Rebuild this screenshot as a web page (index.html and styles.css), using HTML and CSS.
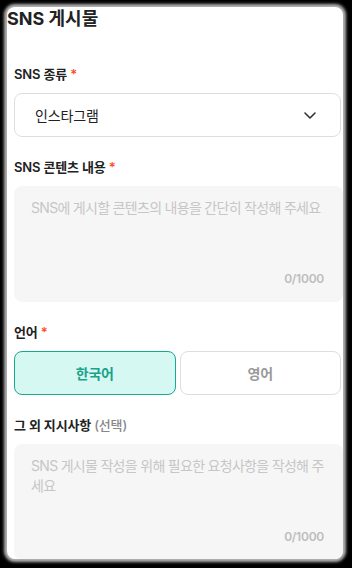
FILE: index.html
```html
<!DOCTYPE html>
<html lang="ko">
<head>
<meta charset="utf-8">
<title>SNS 게시물</title>
<link rel="stylesheet" href="styles.css">
</head>
<body>
<div class="card">
  <h1 class="title">SNS 게시물</h1>
  <div class="form">
    <div class="field">
      <div class="label">SNS 종류 <span class="req">*</span></div>
      <div class="select">
        <span class="select-text">인스타그램</span>
        <svg class="chev" width="12" height="7" viewBox="0 0 12 7"><path d="M1 1l5 5 5-5" fill="none" stroke="#333" stroke-width="1.6" stroke-linecap="round" stroke-linejoin="round"/></svg>
      </div>
    </div>
    <div class="field">
      <div class="label">SNS 콘텐츠 내용 <span class="req">*</span></div>
      <div class="textarea">
        <div class="placeholder">SNS에 게시할 콘텐츠의 내용을 간단히 작성해 주세요</div>
        <div class="counter">0/1000</div>
      </div>
    </div>
    <div class="field">
      <div class="label">언어 <span class="req">*</span></div>
      <div class="toggle">
        <div class="opt opt-on">한국어</div>
        <div class="opt">영어</div>
      </div>
    </div>
    <div class="field">
      <div class="label">그 외 지시사항 <span class="opt-label">(선택)</span></div>
      <div class="textarea">
        <div class="placeholder">SNS 게시물 작성을 위해 필요한 요청사항을 작성해 주세요</div>
        <div class="counter">0/1000</div>
      </div>
    </div>
  </div>
</div>
</body>
</html>
```

FILE: styles.css
```css
html, body {
  margin: 0;
  padding: 0;
}
body {
  width: 352px;
  height: 568px;
  overflow: hidden;
  background: #000;
  font-family: Inter, "Noto Sans CJK KR", sans-serif;
  color: #222;
  letter-spacing: -0.01em;
}
.card {
  margin: 7px;
  width: 336px;
  height: 552px;
  background: #fff;
  border-radius: 8px;
  overflow: hidden;
  box-shadow: 0 0 3px 3px rgba(210, 210, 210, 0.85);
}
.title {
  margin: 0;
  font-size: 18px;
  font-weight: 700;
  line-height: 24px;
  color: #222;
  letter-spacing: 0;
}
.form {
  padding: 33px 0 0 7px;
  display: flex;
  flex-direction: column;
  gap: 20px;
}
.field {
  display: flex;
  flex-direction: column;
  gap: 9px;
}
.label {
  font-size: 13px;
  font-weight: 600;
  line-height: 20px;
  color: #222;
}
.req {
  color: #ff4b1f;
}
.opt-label {
  color: #888;
  font-weight: 500;
}
.select {
  box-sizing: border-box;
  width: 327px;
  height: 44px;
  border: 1px solid #dedede;
  border-radius: 8px;
  display: flex;
  align-items: center;
  justify-content: space-between;
  padding: 0 24px 0 20px;
}
.select-text {
  font-size: 14px;
  color: #222;
}
.chev {
  display: block;
}
.textarea {
  box-sizing: border-box;
  width: 329px;
  height: 116px;
  background: #f6f6f6;
  border-radius: 8px;
  padding: 12px 16px 14px 17px;
  display: flex;
  flex-direction: column;
}
.placeholder {
  font-size: 14px;
  line-height: 20px;
  color: #c6c6c6;
  letter-spacing: -0.05em;
}
.counter {
  margin-top: auto;
  padding-right: 3px;
  text-align: right;
  font-size: 12px;
  font-weight: 600;
  line-height: 18px;
  color: #bdbdbd;
  letter-spacing: -0.02em;
}
.toggle {
  display: flex;
  gap: 4px;
  width: 327px;
}
.opt {
  box-sizing: border-box;
  flex: 1;
  height: 44px;
  border: 1px solid #dedede;
  border-radius: 8px;
  display: flex;
  align-items: center;
  justify-content: center;
  font-size: 14px;
  font-weight: 600;
  color: #9a9a9a;
}
.opt-on {
  background: #d6f8f2;
  border-color: #1aa890;
  color: #1aa38b;
}
```
